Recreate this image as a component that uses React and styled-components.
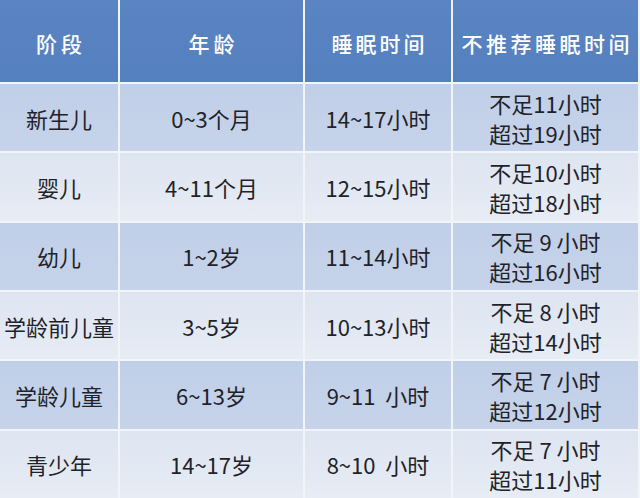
import React from 'react';
import styled, {createGlobalStyle} from 'styled-components';

const GlobalStyle = createGlobalStyle`
    html, body {
        margin: 0;
        padding: 0;
        background: #eef2f8;
    }
    * {
        box-sizing: border-box;
    }
`;

const Table = styled.div`
    width: 640px;
    height: 498px;
    padding-right: 2px;
    display: grid;
    grid-template-columns: 118px 183px 146px 185px;
    grid-template-rows: 82px repeat(6, 1fr);
    column-gap: 2px;
    row-gap: 2px;
    background: #f1f4f9;
    font-family: "Noto Sans CJK SC", "Noto Sans", sans-serif;
    overflow: hidden;
`;

const HeadCell = styled.div`
    display: flex;
    align-items: center;
    justify-content: center;
    background: linear-gradient(180deg, #5a84c2 0%, #5580bf 100%);
    color: #ffffff;
    font-size: 21px;
    font-weight: 500;
    letter-spacing: ${p => p.$spacing || 3}px;
    padding-top: 4px;
    padding-left: ${p => p.$spacing || 3}px;
`;

const Cell = styled.div`
    display: flex;
    flex-direction: column;
    align-items: center;
    justify-content: center;
    background: ${p => p.$dark
        ? 'linear-gradient(180deg, #c0cfe8 0%, #c6d3ea 100%)'
        : 'linear-gradient(180deg, #dde5f1 0%, #e7ecf5 100%)'};
    color: #1f2329;
    font-size: 22px;
    line-height: 30px;
    white-space: pre;
`;

const columns = [
    {title: '阶段', spacing: 4},
    {title: '年龄', spacing: 4},
    {title: '睡眠时间'},
    {title: '不推荐睡眠时间', spacing: 3.5},
];

const rows = [
    ['新生儿', '0~3个月', '14~17小时', ['不足11小时', '超过19小时']],
    ['婴儿', '4~11个月', '12~15小时', ['不足10小时', '超过18小时']],
    ['幼儿', '1~2岁', '11~14小时', ['不足 9 小时', '超过16小时']],
    ['学龄前儿童', '3~5岁', '10~13小时', ['不足 8 小时', '超过14小时']],
    ['学龄儿童', '6~13岁', '9~11  小时', ['不足 7 小时', '超过12小时']],
    ['青少年', '14~17岁', '8~10  小时', ['不足 7 小时', '超过11小时']],
];

const App = () => {
    return (
        <>
            <GlobalStyle/>
            <Table>
                {columns.map(c =>
                    <HeadCell key={c.title} $spacing={c.spacing}>{c.title}</HeadCell>
                )}
                {rows.map((row, i) =>
                    row.map((val, j) =>
                        <Cell key={i + '-' + j} $dark={i % 2 === 0}>
                            {Array.isArray(val)
                                ? val.map(line => <span key={line}>{line}</span>)
                                : val}
                        </Cell>
                    )
                )}
            </Table>
        </>
    );
}

export default App;
